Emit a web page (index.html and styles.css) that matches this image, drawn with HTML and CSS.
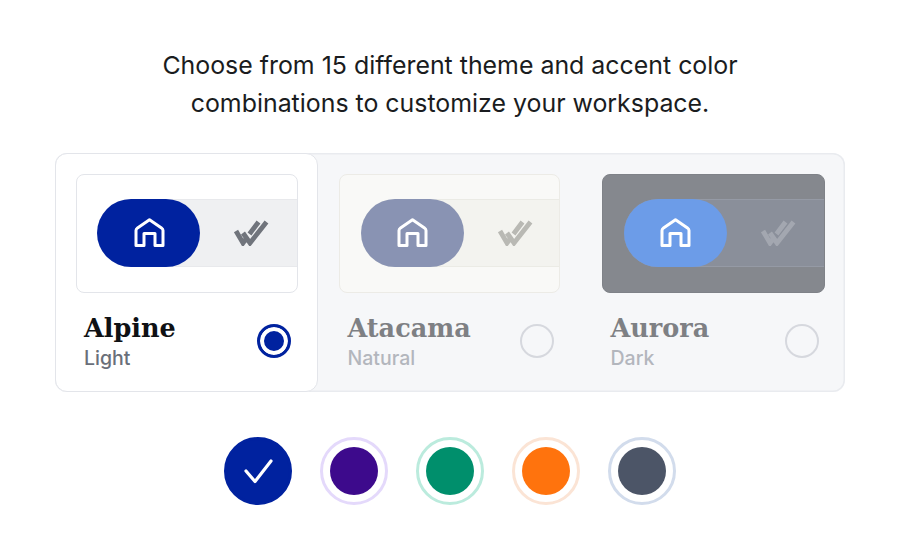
FILE: index.html
```html
<!DOCTYPE html>
<html lang="en">
<head>
  <meta charset="UTF-8">
  <title>Themes</title>
  <link rel="stylesheet" href="styles.css">
</head>
<body>
  <svg class="defs" width="0" height="0">
    <symbol id="home" viewBox="0 0 30 30">
      <path d="M1.500 27.500V12.500Q1.500 11 3 10L15 1.800L27 10Q28.500 11 28.500 12.500V27.500H20.500V15.500H9.500V27.500Z" fill="none" stroke="currentColor" stroke-width="3" stroke-linejoin="round"/>
    </symbol>
    <symbol id="checks" viewBox="0 0 36 26">
      <path d="M3 11L10 23L14 17.500M10 13L17 23L33.500 2M16.500 14L25.500 2" fill="none" stroke="currentColor" stroke-width="4.800"/>
    </symbol>
  </svg>

  <p class="intro">Choose from 15 different theme and accent color<br>combinations to customize your workspace.</p>

  <div class="themes">
    <div class="theme selected">
      <div class="preview alpine">
        <div class="bar">
          <div class="pill"><svg class="home"><use href="#home"/></svg></div>
          <svg class="checks"><use href="#checks"/></svg>
        </div>
      </div>
      <div class="info">
        <div>
          <div class="name">Alpine</div>
          <div class="kind">Light</div>
        </div>
        <span class="radio"></span>
      </div>
    </div>

    <div class="theme">
      <div class="preview atacama">
        <div class="bar">
          <div class="pill"><svg class="home"><use href="#home"/></svg></div>
          <svg class="checks"><use href="#checks"/></svg>
        </div>
      </div>
      <div class="info">
        <div>
          <div class="name">Atacama</div>
          <div class="kind">Natural</div>
        </div>
        <span class="radio"></span>
      </div>
    </div>

    <div class="theme">
      <div class="preview aurora">
        <div class="bar">
          <div class="pill"><svg class="home"><use href="#home"/></svg></div>
          <svg class="checks"><use href="#checks"/></svg>
        </div>
      </div>
      <div class="info">
        <div>
          <div class="name">Aurora</div>
          <div class="kind">Dark</div>
        </div>
        <span class="radio"></span>
      </div>
    </div>
  </div>

  <div class="accents">
    <div class="accent active">
      <svg width="30" height="26" viewBox="0 0 30 26"><path d="M3 13L12 23.500L28 3" fill="none" stroke="#fff" stroke-width="3.200" stroke-linecap="round" stroke-linejoin="round"/></svg>
    </div>
    <div class="accent purple"><span></span></div>
    <div class="accent green"><span></span></div>
    <div class="accent orange"><span></span></div>
    <div class="accent slate"><span></span></div>
  </div>
</body>
</html>
```

FILE: styles.css
```css
body {
  margin: 0;
  background: #ffffff;
  font-family: Inter, "Liberation Sans", sans-serif;
}

.defs {
  display: block;
}

.intro {
  margin: 46px 0 31px;
  font-size: 24.900px;
  line-height: 38px;
  text-align: center;
  color: #1a1c20;
}

.themes {
  display: grid;
  grid-template-columns: 263px 263px 264px;
  width: 790px;
  height: 239px;
  margin-left: 55px;
  box-sizing: border-box;
  background: #f6f7f9;
  border-radius: 12px;
  box-shadow: inset 0 0 0 1.5px #e9ebef;
}

.theme {
  box-sizing: border-box;
  padding: 21px 21px 0;
}

.theme:last-child {
  padding-right: 20px;
}

.theme.selected {
  background: #ffffff;
  border: 1.5px solid #e3e5ea;
  border-radius: 12px;
  padding: 19.500px 19.500px 0 19.500px;
}

.preview {
  box-sizing: border-box;
  height: 119px;
  padding-top: 24px;
  border-radius: 8px;
  border: 1.5px solid;
  overflow: hidden;
}

.bar {
  display: flex;
  align-items: center;
  height: 68px;
  margin-left: 20.500px;
  border-radius: 34px 0 0 34px;
  border-top: 1px solid;
  border-bottom: 1px solid;
  box-sizing: border-box;
}

.pill {
  display: flex;
  flex: none;
  align-items: center;
  justify-content: center;
  width: 103px;
  height: 68px;
  border-radius: 34px;
}

.home {
  width: 31px;
  height: 30px;
  margin-left: 1px;
  color: #ffffff;
}

.checks {
  width: 36px;
  height: 26px;
  margin-left: 33px;
}

.alpine {
  background: #ffffff;
  border-color: #e3e5ea;
}

.alpine .bar {
  background: #eff0f2;
  border-color: #e8e9ec;
}

.alpine .pill {
  background: #00229f;
}

.alpine .checks {
  color: #70747c;
}

.atacama {
  background: #f9f9f7;
  border-color: #ecebe6;
}

.atacama .bar {
  background: #f3f3ef;
  border-color: #ebebe5;
}

.atacama .pill {
  background: #8993b3;
}

.atacama .checks {
  color: #b9b9b4;
}

.aurora {
  background: #85888e;
  border-color: #7f8288;
}

.aurora .bar {
  background: #8a8f9a;
  border-color: #959aa5;
}

.aurora .pill {
  background: #6c9ce8;
}

.aurora .checks {
  color: #a3a7b0;
}

.info {
  display: flex;
  align-items: center;
  justify-content: space-between;
  padding: 19px 0 0 8.500px;
}

.name {
  font-family: "DejaVu Serif", "Liberation Serif", serif;
  font-size: 25.500px;
  font-weight: bold;
  line-height: 32px;
  color: #7e8084;
}

.kind {
  margin-top: 2px;
  font-size: 19.500px;
  font-weight: 500;
  line-height: 24px;
  color: #b3b6bd;
}

.selected .name {
  color: #0f1114;
}

.selected .kind {
  color: #6a6f79;
}

.radio {
  box-sizing: border-box;
  flex: none;
  width: 34px;
  height: 34px;
  margin-right: 6px;
  border-radius: 50%;
  border: 2.500px solid #d6d8de;
}

.selected .radio {
  margin-right: 7px;
  border: 3px solid #00229f;
  background: #00229f;
  box-shadow: inset 0 0 0 4px #ffffff;
}

.accents {
  display: flex;
  justify-content: center;
  gap: 28px;
  margin-top: 45px;
}

.accent {
  box-sizing: border-box;
  display: flex;
  align-items: center;
  justify-content: center;
  width: 68px;
  height: 68px;
  border-radius: 50%;
  border: 3.500px solid;
}

.accent span {
  width: 48px;
  height: 48px;
  border-radius: 50%;
}

.active {
  background: #00229f;
  border-color: #00229f;
}

.purple {
  border-color: #e4d9fb;
}

.purple span {
  background: #3d0a8c;
}

.green {
  border-color: #bbebdd;
}

.green span {
  background: #008f6c;
}

.orange {
  border-color: #fbe4d5;
}

.orange span {
  background: #ff730d;
}

.slate {
  border-color: #d2dcec;
}

.slate span {
  background: #4c5567;
}
```
